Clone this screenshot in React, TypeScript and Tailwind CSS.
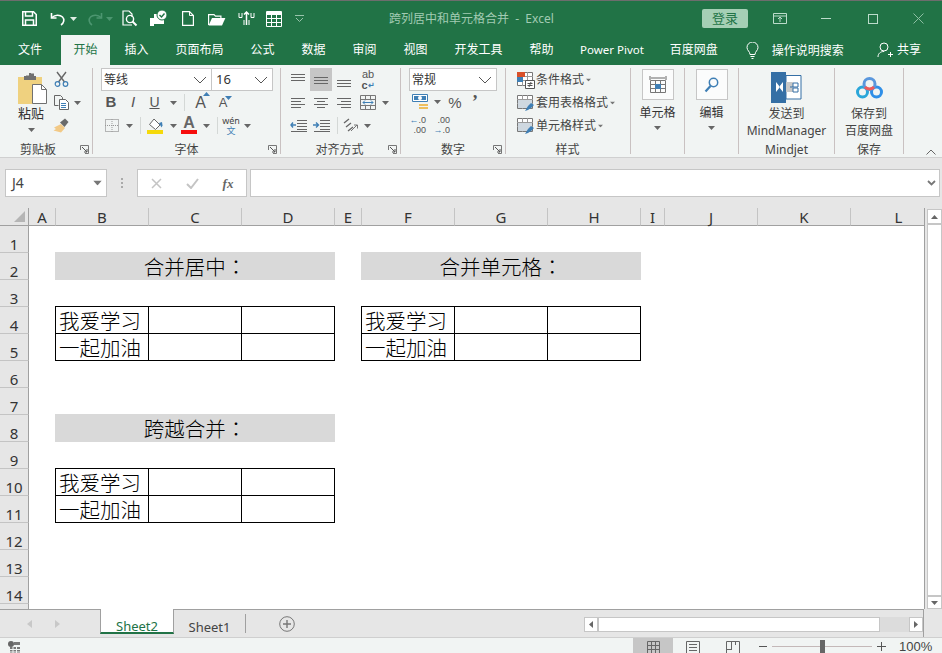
import type { ReactNode } from 'react'
import clsx from 'clsx'

const cjk = "font-['Noto_Sans','Noto_Sans_CJK_SC',sans-serif]"

function Svg({ w, h, children, className }: { w: number; h: number; children: ReactNode; className?: string }) {
  return (
    <svg width={w} height={h} viewBox={`0 0 ${w} ${h}`} fill="none" className={clsx('block shrink-0', className)}>
      {children}
    </svg>
  )
}

function Caret({ color = '#666666', className }: { color?: string; className?: string }) {
  return (
    <Svg w={7} h={4} className={className}>
      <path d="M0 0h7L3.5 4z" fill={color} />
    </Svg>
  )
}

function Chevron({ className }: { className?: string }) {
  return (
    <Svg w={14} h={8} className={className}>
      <path d="M1 1l6 6 6-6" stroke="#555" strokeWidth="1" />
    </Svg>
  )
}

function Slot({ className, children }: { className: string; children?: ReactNode }) {
  return <div className={clsx('flex shrink-0 items-center justify-center', className)}>{children}</div>
}

function VSep({ className }: { className?: string }) {
  return <div className={clsx('h-[17px] w-px shrink-0 bg-[#d4d8d6]', className)} />
}

function Lines({ rows }: { rows: [number, number, number][] }) {
  return (
    <Svg w={16} h={16}>
      {rows.map(([x1, x2, y]) => (
        <path key={y} d={`M${x1} ${y + 0.5}H${x2}`} stroke="#666" />
      ))}
    </Svg>
  )
}

function Group({
  className,
  label,
  launcher,
  children,
}: {
  className: string
  label?: ReactNode
  launcher?: boolean
  children: ReactNode
}) {
  return (
    <div className={clsx('relative flex h-full shrink-0 flex-col border-r border-[#c9c1c1]', className)}>
      <div className="h-[74px] shrink-0">{children}</div>
      <div className="flex h-[15px] shrink-0 items-center justify-center text-xs leading-none text-[#444]">{label}</div>
      {launcher && (
        <Svg w={9} h={9} className="absolute right-[3px] bottom-0">
          <path d="M.5 5V.5H8.5V8.5H5" stroke="#777" />
          <path d="M2 2l5 5M7 4v3H4" stroke="#555" />
        </Svg>
      )}
    </div>
  )
}

function Combo({ className, text, textClass }: { className: string; text: string; textClass?: string }) {
  return (
    <div className={clsx('flex h-[23px] shrink-0 items-center justify-between border border-[#c6c6c6] bg-white pr-[4px] pl-[2px]', className)}>
      <span className={clsx('text-xs leading-none text-[#333]', textClass)}>{text}</span>
      <Chevron />
    </div>
  )
}

function TitleBar() {
  return (
    <div className="flex h-[35px] shrink-0 items-center border-t border-[#6d6d6d] bg-[#217346] pt-[1px]">
      <Slot className="ml-[21px] w-[16px]">
        <Svg w={15} h={15}>
          <path d="M.75.75H11.5l2.75 2.75V14.25H.75z" stroke="#fff" strokeWidth="1.5" />
          <path d="M3.5 1v4h7V1M3.5 14V9h8v5" stroke="#fff" strokeWidth="1.5" />
        </Svg>
      </Slot>
      <Slot className="ml-[13px] w-[16px]">
        <Svg w={16} h={14}>
          <path d="M1.500 1v5h5" stroke="#fff" strokeWidth="1.6" />
          <path d="M2 5.500C5 2.500 10 2.500 12.500 5c2.300 2.300 1.500 6-1.500 8" stroke="#fff" strokeWidth="1.6" />
        </Svg>
      </Slot>
      <Caret color="#dfeee5" className="ml-[4px]" />
      <Slot className="ml-[10px] w-[16px]">
        <Svg w={16} h={14}>
          <path d="M14.500 1v5h-5" stroke="#4c9670" strokeWidth="1.6" />
          <path d="M14 5.500C11 2.500 6 2.500 3.500 5c-2.300 2.300-1.500 6 1.500 8" stroke="#4c9670" strokeWidth="1.6" />
        </Svg>
      </Slot>
      <Caret color="#4c9670" className="ml-[3px]" />
      <Slot className="ml-[9px] w-[16px]">
        <Svg w={16} h={17}>
          <path d="M10 15H1V1h6l3 3v3" stroke="#fff" strokeWidth="1.2" />
          <circle cx="8" cy="9" r="3.6" stroke="#fff" strokeWidth="1.4" />
          <path d="M10.500 11.500l4 4" stroke="#fff" strokeWidth="2" />
        </Svg>
      </Slot>
      <Slot className="ml-[13px] w-[16px]">
        <Svg w={18} h={17}>
          <path d="M0 8h4V4h6v4h4v6H4v2H0z" fill="#fff" />
          <circle cx="12" cy="5" r="5" fill="#fff" stroke="#217346" />
          <path d="M9.500 5l2 2 3-3.500" stroke="#217346" strokeWidth="1.4" />
        </Svg>
      </Slot>
      <Slot className="ml-[13px] w-[16px]">
        <Svg w={12} h={15}>
          <path d="M.6.6H7.500L11.400 4.500V14.400H.6z" stroke="#fff" strokeWidth="1.2" />
          <path d="M7.500.6V4.500H11.400" stroke="#fff" />
        </Svg>
      </Slot>
      <Slot className="ml-[13px] w-[16px]">
        <Svg w={18} h={14}>
          <path d="M.6 13V2.600H6l1.500 1.500h5.400V6" stroke="#fff" strokeWidth="1.2" />
          <path d="M.6 13.400L4 6h13.400l-3.400 7.400z" fill="#fff" />
        </Svg>
      </Slot>
      <Slot className="ml-[13px] w-[16px]">
        <Svg w={17} h={15}>
          <path d="M8.500 1v13M6 3.500L8.500 1 11 3.500" stroke="#fff" strokeWidth="1.5" />
          <path d="M1 2v4.500h3V2M13 2v4.500h3V2M6 9v5M11 9v5" stroke="#fff" />
        </Svg>
      </Slot>
      <Slot className="ml-[12px] w-[16px]">
        <Svg w={16} h={16}>
          <path d="M.5.500h15v15H.5z" stroke="#fff" />
          <path d="M0 1h16v3H0z" fill="#fff" />
          <path d="M0 7.500h16M0 11.500h16M5.500 0v16M10.500 0v16" stroke="#fff" />
        </Svg>
      </Slot>
      <Slot className="ml-[12px] w-[10px]">
        <Svg w={9} h={7}>
          <path d="M0 .5h9" stroke="#98c4ab" />
          <path d="M1 3l3.500 3.500L8 3" stroke="#98c4ab" />
        </Svg>
      </Slot>
      <div className="ml-[85px] w-[160px] text-center text-xs leading-none whitespace-pre text-[#a2cbb3]">跨列居中和单元格合并  -  Excel</div>
      <div className="ml-[153px] flex h-[19px] w-[46px] items-center justify-center rounded-[2px] bg-[#a5cfb5] text-[13px] leading-none text-[#217346]">登录</div>
      <Slot className="ml-[25px] w-[14px]">
        <Svg w={14} h={11}>
          <path d="M.5.5h13v10H.5zM1 3h12" stroke="#bcdccb" />
          <path d="M7 9V4.500M5 6l2-2 2 2" stroke="#bcdccb" />
        </Svg>
      </Slot>
      <Slot className="ml-[33px] w-[11px]">
        <div className="h-px w-[10px] bg-[#bcdccb]" />
      </Slot>
      <Slot className="ml-[36px] w-[11px]">
        <div className="h-[10px] w-[10px] border border-[#bcdccb]" />
      </Slot>
      <Slot className="ml-[35px] w-[11px]">
        <Svg w={11} h={11}>
          <path d="M.5.5l10 10M10.500.5l-10 10" stroke="#8dbfa3" />
        </Svg>
      </Slot>
    </div>
  )
}

const tabNames = ['插入', '页面布局', '公式', '数据', '审阅', '视图', '开发工具', '帮助']

function TabBar() {
  return (
    <div className="flex h-[30px] shrink-0 items-end bg-[#217346] text-xs leading-none text-white">
      <div className="flex h-[30px] items-center pr-[19px] pl-[18px]">文件</div>
      <div className="flex h-[30px] w-[49px] items-center justify-center bg-[#f1f4f3] text-[#217346]">开始</div>
      <div className="ml-[1px] flex">
        {tabNames.map((t) => (
          <div key={t} className="flex h-[30px] w-[51px] items-center justify-center px-0 whitespace-nowrap first:w-[51px] [&:nth-child(2)]:w-[75px] [&:nth-child(7)]:w-[75px]">
            {t}
          </div>
        ))}
        <div className="flex h-[30px] items-center pr-[13px] pl-[13px] text-[11.5px] whitespace-nowrap">Power Pivot</div>
        <div className="flex h-[30px] items-center px-[13px] whitespace-nowrap">百度网盘</div>
      </div>
      <Slot className="ml-[14px] h-[30px] w-[16px]">
        <Svg w={13} h={17}>
          <path d="M4 12.500C4 9.500 1 8.500 1 5.500a5.500 5.500 0 0 1 11 0c0 3-3 4-3 7zM4.500 14.500h4M5.500 16.500h2" stroke="#fff" strokeWidth="1" />
        </Svg>
      </Slot>
      <div className="ml-[11px] flex h-[30px] items-center pt-[1px]">操作说明搜索</div>
      <Slot className="ml-[33px] h-[30px] w-[16px]">
        <Svg w={16} h={16}>
          <circle cx="7" cy="5" r="4" stroke="#fff" />
          <path d="M1 15c0-3.500 2.500-5.500 6-5.500M11 12.500h5M13.500 10v5" stroke="#fff" />
        </Svg>
      </Slot>
      <div className="ml-[4px] flex h-[30px] items-center">共享</div>
    </div>
  )
}

function ClipboardGroup() {
  return (
    <Group className="w-[93px]" label={<span className="pr-[16px]">剪贴板</span>} launcher>
      <div className="flex">
        <div className="flex w-[48px] flex-col items-center pt-[5px] pl-[14px]">
          <Svg w={30} h={31} className="ml-[4px]">
            <path d="M0 4h24v27H0z" fill="#efd17f" />
            <path d="M8 3h8V0.500h-3V0h-2v2.500H8zM6 3h12v4H6z" fill="#707070" />
            <path d="M14.500 11.500h9l5 5v14h-14z" fill="#fff" stroke="#707070" />
            <path d="M23.500 11.500v5h5" stroke="#707070" />
          </Svg>
          <span className="text-[13px] leading-[18px] text-[#333]">粘贴</span>
          <Caret className="mt-[6px]" />
        </div>
        <div className="flex flex-col pt-[2px]">
          <Slot className="ml-[5px] h-[17px] w-[16px]">
            <Svg w={15} h={16}>
              <path d="M3 1l7.500 10M12 1L4.500 11" stroke="#666" strokeWidth="1.400" />
              <circle cx="3.500" cy="13" r="2.300" stroke="#3f7fb5" strokeWidth="1.200" />
              <circle cx="11.500" cy="13" r="2.300" stroke="#3f7fb5" strokeWidth="1.200" />
            </Svg>
          </Slot>
          <div className="mt-[7px] flex h-[17px] items-center">
            <Slot className="ml-[5px] w-[16px]">
              <Svg w={15} h={15}>
                <path d="M.5.500h6l2 2v2M.5.500v10h4" stroke="#666" />
                <path d="M5.500 4.500h6l3 3v7h-9z" fill="#fff" stroke="#666" />
                <path d="M7 8.500h5M7 10.500h5M7 12.500h5" stroke="#3f7fb5" />
              </Svg>
            </Slot>
            <Caret className="ml-[5px]" />
          </div>
          <Slot className="mt-[6px] ml-[5px] h-[17px] w-[16px]">
            <Svg w={16} h={15}>
              <path d="M8 6l4 4-4 4.500L.5 12.500 3 11 1 9.500z" fill="#f2c986" />
              <path d="M7 4.500l4.500 4.500L15.500 4 12 .5z" fill="#6a6a6a" />
            </Svg>
          </Slot>
        </div>
      </div>
    </Group>
  )
}

function FontGroup() {
  return (
    <Group className="w-[188px]" label={<span>字体</span>} launcher>
      <div className="flex flex-col pl-[8px]">
        <div className="flex">
          <Combo className="w-[111px]" text="等线" />
          <Combo className="-ml-px w-[62px]" text="16" textClass="text-[13px] pl-[2px]" />
        </div>
        <div className="mt-[1px] flex h-[21px] items-center font-['Liberation_Sans',sans-serif] text-[#555]">
          <Slot className="-ml-px w-[22px] text-[15px] font-bold">B</Slot>
          <Slot className="w-[22px] text-[15px] italic">I</Slot>
          <Slot className="w-[21px] text-[14px] underline">U</Slot>
          <Caret className="ml-[5px]" />
          <VSep className="ml-[7px]" />
          <Slot className="relative ml-[5px] w-[21px] text-[16px]">
            A
            <Caret color="#3f7fb5" className="absolute top-[1px] right-[1px] rotate-180" />
          </Slot>
          <Slot className="relative ml-[1px] w-[22px] text-[13px]">
            A
            <Caret color="#3f7fb5" className="absolute top-[3px] right-[2px]" />
          </Slot>
        </div>
        <div className="mt-[2px] flex h-[21px] items-center">
          <Slot className="ml-[3px] w-[16px]">
            <Svg w={14} h={13}>
              <path d="M.5.5h13v12H.5z" stroke="#777" strokeDasharray="1 1" />
              <path d="M0 6.500h14M7 0v13" stroke="#999" strokeDasharray="1 1" />
            </Svg>
          </Slot>
          <Caret className="ml-[6px]" />
          <VSep className="ml-[7px]" />
          <Slot className="ml-[5px] w-[18px]">
            <div className="flex flex-col items-center">
              <Svg w={16} h={12}>
                <path d="M7 1l6 6-4.500 4.500-6-5z" fill="#fff" stroke="#666" />
                <path d="M12 5l3-1 .5 3.500-1 2z" fill="#3f7fb5" />
              </Svg>
              <div className="h-[4px] w-[16px] bg-[#f5d90a]" />
            </div>
          </Slot>
          <Caret className="ml-[6px]" />
          <div className="ml-[4px] flex w-[16px] flex-col items-center">
            <span className="font-['Liberation_Sans',sans-serif] text-[16px] leading-[12px] font-bold text-[#666]">A</span>
            <div className="mt-[1px] h-[4px] w-[16px] bg-[#f60d0d]" />
          </div>
          <Caret className="ml-[6px]" />
          <VSep className="ml-[7px]" />
          <div className="ml-[4px] flex w-[18px] flex-col items-center text-[9px] leading-[10px]">
            <span className="text-[#444]">wén</span>
            <span className="text-[#3f7fb5]">文</span>
          </div>
          <Caret className="ml-[4px]" />
        </div>
      </div>
    </Group>
  )
}

function AlignGroup() {
  return (
    <Group className="w-[120px]" label={<span className="pr-[2px]">对齐方式</span>} launcher>
      <div className="flex flex-col pl-[6px]">
        <div className="flex h-[23px] items-center">
          <Slot className="h-[23px] w-[22px]">
            <Lines rows={[[1, 15, 2], [1, 15, 5], [1, 15, 8]]} />
          </Slot>
          <Slot className="ml-[1px] h-[23px] w-[22px] bg-[#c6c6c6]">
            <Lines rows={[[1, 15, 5], [1, 15, 8], [1, 15, 11]]} />
          </Slot>
          <Slot className="ml-[1px] h-[23px] w-[22px]">
            <Lines rows={[[1, 15, 8], [1, 15, 11], [1, 15, 14]]} />
          </Slot>
          <Slot className="ml-[1px] w-[24px] flex-col font-['Liberation_Sans',sans-serif] text-[11px] leading-[11px] text-[#555]">
            <span>ab</span>
            <span className="flex items-center font-bold">
              c<span className="text-[8px] text-[#3f7fb5]">↵</span>
            </span>
          </Slot>
        </div>
        <div className="mt-[1px] flex h-[21px] items-center">
          <Slot className="w-[22px]">
            <Lines rows={[[1, 15, 3], [1, 11, 6], [1, 15, 9], [1, 11, 12]]} />
          </Slot>
          <Slot className="ml-[1px] w-[22px]">
            <Lines rows={[[1, 15, 3], [4, 12, 6], [1, 15, 9], [4, 12, 12]]} />
          </Slot>
          <Slot className="ml-[1px] w-[22px]">
            <Lines rows={[[1, 15, 3], [5, 15, 6], [1, 15, 9], [5, 15, 12]]} />
          </Slot>
          <Slot className="ml-[2px] w-[22px]">
            <Svg w={16} h={15}>
              <path d="M.5.500h15v14H.5zM0 4.500h16M0 10.500h16M5.500 0v4M10.500 0v4M5.500 11v4M10.500 11v4" stroke="#777" />
              <path d="M3 7.500h10M3 7.500l2-2M3 7.500l2 2M13 7.500l-2-2M13 7.500l-2 2" stroke="#3f7fb5" />
            </Svg>
          </Slot>
          <Caret className="ml-[3px]" />
        </div>
        <div className="mt-[2px] flex h-[21px] items-center">
          <Slot className="w-[22px]">
            <Svg w={17} h={14}>
              <path d="M7 1.500h10M7 4.500h10M7 7.500h10M7 10.500h10M1 12.500h16" stroke="#666" />
              <path d="M6 6H1M3 3.500L1 6l2 2.500" stroke="#3f7fb5" strokeWidth="1.400" />
            </Svg>
          </Slot>
          <Slot className="ml-[1px] w-[22px]">
            <Svg w={17} h={14}>
              <path d="M7 1.500h10M7 4.500h10M7 7.500h10M7 10.500h10M1 12.500h16" stroke="#666" />
              <path d="M0 6h5M3 3.500L5.500 6 3 8.500" stroke="#3f7fb5" strokeWidth="1.400" />
            </Svg>
          </Slot>
          <VSep className="ml-[5px]" />
          <Slot className="ml-[4px] w-[18px]">
            <Svg w={16} h={15}>
              <path d="M1 5l5-4M3 9l5-4M5 13l5-4" stroke="#666" strokeWidth="1.300" />
              <path d="M8 13l6-6M11 7h3.500v3.500" stroke="#777" />
            </Svg>
          </Slot>
          <Caret className="ml-[4px]" />
        </div>
      </div>
    </Group>
  )
}

function NumberGroup() {
  return (
    <Group className="w-[105px]" label={<span>数字</span>} launcher>
      <div className="flex flex-col pl-[8px]">
        <Combo className="w-[88px]" text="常规" />
        <div className="flex h-[22px] items-center">
          <Slot className="ml-[2px] w-[18px]">
            <Svg w={17} h={16}>
              <path d="M.5.500h15v7H.5z" fill="#fff" stroke="#3f7fb5" />
              <path d="M2 2h12v4H2z" fill="#3f7fb5" />
              <circle cx="8" cy="4" r="2" fill="#fff" />
              <path d="M7 10h9v2H7zM7 13h9v2H7z" fill="#eebf5e" />
            </Svg>
          </Slot>
          <Caret className="ml-[5px]" />
          <Slot className="ml-[3px] w-[22px] font-['Liberation_Sans',sans-serif] text-[15px] leading-none text-[#555]">%</Slot>
          <Slot className="ml-[3px] w-[12px] font-['Liberation_Serif',serif] text-[18px] leading-none font-bold text-[#555]">’</Slot>
        </div>
        <div className="mt-[1px] flex h-[22px] items-center font-['Liberation_Sans',sans-serif] text-[9px] leading-[10px] text-[#555]">
          <div className="-ml-px w-[18px] text-right">
            <div>
              <span className="text-[#3f7fb5]">←</span>.0
            </div>
            <div>.00</div>
          </div>
          <div className="ml-[6px] w-[18px] text-right">
            <div>.00</div>
            <div>
              <span className="text-[#3f7fb5]">→</span>.0
            </div>
          </div>
        </div>
      </div>
    </Group>
  )
}

function StyleIcon({ accent }: { accent?: boolean }) {
  return (
    <Svg w={18} h={17}>
      <path d="M.5.5h15v13H.5z" fill="#fff" stroke="#777" />
      <path d="M0 4.500h16M0 8.500h16M5.500 0v14M10.500 0v14" stroke="#999" />
      {accent ? (
        <>
          <path d="M0 0h8v5H0z" fill="#d8502a" />
          <path d="M0 5h6v5H0z" fill="#3f7fb5" />
          <path d="M8.500 8.500h9v8h-9z" fill="#fff" stroke="#555" />
          <path d="M10.500 11.500h5M10.500 13.500h5M14 10l-2 5" stroke="#555" />
        </>
      ) : (
        <>
          <path d="M1 5h14v8H1z" fill="#cfd8e0" />
          <path d="M8 16l3-5 3-3 3 2-3 3-3 2z" fill="#3f7fb5" />
        </>
      )}
    </Svg>
  )
}

function StyleRow({ text, accent, className }: { text: string; accent?: boolean; className?: string }) {
  return (
    <div className={clsx('flex h-[22px] items-center pl-[11px]', className)}>
      <StyleIcon accent={accent} />
      <span className="ml-[1px] text-xs leading-none text-[#444]">{text}</span>
      <Caret color="#777" className="ml-[1px] scale-75" />
    </div>
  )
}

function StylesGroup() {
  return (
    <Group className="w-[125px]" label={<span className="pr-[1px]">样式</span>}>
      <div className="flex flex-col pt-[1px]">
        <StyleRow text="条件格式" accent />
        <StyleRow text="套用表格格式" className="mt-[1px]" />
        <StyleRow text="单元格样式" className="mt-[1px]" />
      </div>
    </Group>
  )
}

function BoxGroup({ text, children, className }: { text: string; children: ReactNode; className: string }) {
  return (
    <Group className={className}>
      <div className="flex flex-col items-center pt-[1px]">
        <Slot className="h-[31px] w-[32px] border border-[#c6c6c6] bg-[#fbfcfc]">{children}</Slot>
        <span className="mt-[4px] text-xs leading-[17px] text-[#333]">{text}</span>
        <Caret className="mt-[5px]" />
      </div>
    </Group>
  )
}

function BigGroup({
  icon,
  lines,
  label,
  className,
}: {
  icon: ReactNode
  lines: string[]
  label: string
  className: string
}) {
  return (
    <Group className={className} label={label}>
      <div className="flex flex-col items-center pt-[4px] text-xs leading-[17px] text-[#444]">
        <div className="flex h-[31px] items-center">{icon}</div>
        <div className="mt-[2px] text-center">
          {lines.map((l) => (
            <div key={l}>{l}</div>
          ))}
        </div>
      </div>
    </Group>
  )
}

function Ribbon() {
  return (
    <div className={clsx('flex h-[93px] shrink-0 border-b border-[#d0d0d0] bg-[#f1f4f3] pt-[3px] pb-[3px]', cjk)}>
      <ClipboardGroup />
      <FontGroup />
      <AlignGroup />
      <NumberGroup />
      <StylesGroup />
      <BoxGroup text="单元格" className="w-[54px]">
        <Svg w={18} h={17}>
          <path d="M1 0v4M17 0v4M2 2h14" stroke="#666" />
          <path d="M1.500 4.500h15v12h-15zM1 8.500h16M1 12.500h16M6.500 4v13M11.500 4v13" stroke="#777" />
          <path d="M6 8h6v5H6z" fill="#3f7fb5" />
        </Svg>
      </BoxGroup>
      <BoxGroup text="编辑" className="w-[54px]">
        <Svg w={15} h={16}>
          <circle cx="9.500" cy="5.500" r="4.200" stroke="#3f7fb5" strokeWidth="1.500" />
          <path d="M6.500 9L1.500 14.500" stroke="#3f7fb5" strokeWidth="2.200" />
        </Svg>
      </BoxGroup>
      <BigGroup
        className="w-[96px]"
        label="Mindjet"
        lines={['发送到', 'MindManager']}
        icon={
          <Svg w={31} h={31}>
            <path d="M0 0h15v31H0z" fill="#356fa5" />
            <path d="M15 3.500h15v23.500H15z" fill="#fff" stroke="#356fa5" />
            <path d="M5 10l4 5-4 5zM12 10l-4 5 4 5z" fill="#fff" />
            <path d="M15 10h7v10h-7z" fill="#c8c8c8" />
            <path d="M19 15h3M22 11h5v4h-5zM22 16h5v4h-5z" stroke="#356fa5" />
          </Svg>
        }
      />
      <BigGroup
        className="w-[69px]"
        label="保存"
        lines={['保存到', '百度网盘']}
        icon={
          <Svg w={27} h={24}>
            <circle cx="6.500" cy="16" r="5" stroke="#2aa6d9" strokeWidth="3" />
            <circle cx="20.500" cy="16" r="5" stroke="#2f8fe8" strokeWidth="3" />
            <circle cx="13.500" cy="8" r="5.500" stroke="#5a97dd" strokeWidth="3" />
            <path d="M9 11c2 2.500 7 2.500 9 0" stroke="#ef5a5a" strokeWidth="3" />
          </Svg>
        }
      />
      <div className="flex flex-1 items-end justify-end pr-[6px]">
        <Svg w={10} h={6} className="-mb-px">
          <path d="M.5 5.500L5 1l4.500 4.500" stroke="#666" />
        </Svg>
      </div>
    </div>
  )
}

function FormulaBar() {
  return (
    <div className="flex h-[50px] shrink-0 bg-[#e6e6e6] pt-[11px] pl-[5px]">
      <div className="flex h-[28px] w-[102px] items-center justify-between border border-[#c6c6c6] bg-white pr-[5px] pl-[6px]">
        <span className="font-['Noto_Sans',sans-serif] text-[14px] leading-none text-[#444]">J4</span>
        <Caret color="#777" className="scale-125" />
      </div>
      <div className="ml-[14px] flex h-[28px] w-[3px] flex-col justify-center gap-[2px]">
        <div className="h-[2px] w-[2px] bg-[#aaa]" />
        <div className="h-[2px] w-[2px] bg-[#aaa]" />
        <div className="h-[2px] w-[2px] bg-[#aaa]" />
      </div>
      <div className="ml-[13px] flex h-[28px] w-[110px] items-center border border-[#c6c6c6] bg-white">
        <Slot className="ml-[8px] w-[20px]">
          <Svg w={11} h={11}>
            <path d="M1 1l9 9M10 1l-9 9" stroke="#c4c4c4" strokeWidth="1.500" />
          </Svg>
        </Slot>
        <Slot className="ml-[16px] w-[20px]">
          <Svg w={13} h={11}>
            <path d="M1 6l4 4 7-9" stroke="#c4c4c4" strokeWidth="2" />
          </Svg>
        </Slot>
        <Slot className="ml-[16px] w-[20px] font-['Liberation_Serif',serif] text-[13px] leading-none font-bold text-[#666] italic">fx</Slot>
      </div>
      <div className="ml-[3px] flex h-[28px] w-[690px] items-center justify-end border border-[#c6c6c6] bg-white pr-[3px]">
        <Svg w={9} h={6}>
          <path d="M1 1l3.500 3.500L8 1" stroke="#777" strokeWidth="1.800" />
        </Svg>
      </div>
    </div>
  )
}

const cols: [string, string][] = [
  ['A', 'col-start-2'],
  ['B', 'col-start-3'],
  ['C', 'col-start-4'],
  ['D', 'col-start-5'],
  ['E', 'col-start-6'],
  ['F', 'col-start-7'],
  ['G', 'col-start-8'],
  ['H', 'col-start-9'],
  ['I', 'col-start-10'],
  ['J', 'col-start-11'],
  ['K', 'col-start-12'],
  ['L', 'col-start-13 pl-[22px] border-r-0'],
]

const rows: [number, string][] = [
  [1, 'row-start-2'],
  [2, 'row-start-3'],
  [3, 'row-start-4'],
  [4, 'row-start-5'],
  [5, 'row-start-6'],
  [6, 'row-start-7'],
  [7, 'row-start-8'],
  [8, 'row-start-9'],
  [9, 'row-start-10'],
  [10, 'row-start-11'],
  [11, 'row-start-12'],
  [12, 'row-start-13'],
  [13, 'row-start-14'],
  [14, 'row-start-15'],
]

const sheetFont = "font-['Noto_Sans_CJK_SC',sans-serif] text-[20.5px] font-light text-black"

function Heading({ text, className }: { text: string; className: string }) {
  return (
    <div className={clsx('col-span-3 -mt-px -ml-px flex h-[28px] w-[280px] items-center justify-center bg-[#d9d9d9] pt-[1px] leading-none', sheetFont, className)}>
      {text}
      <span className="font-['Noto_Sans_CJK_TC',sans-serif]">：</span>
    </div>
  )
}

function DataTable({ className }: { className: string }) {
  const cell = 'border-r border-b border-black'
  return (
    <div className={clsx('col-span-3 row-span-2 -mt-px -ml-px grid h-[55px] w-[280px] grid-cols-[93px_93px_93px] grid-rows-[27px_27px] border-t border-l border-black leading-none', sheetFont, className)}>
      <div className={clsx(cell, 'flex items-end pb-[3px] pl-[3px]')}>我爱学习</div>
      <div className={cell} />
      <div className={cell} />
      <div className={clsx(cell, 'flex items-end pb-[3px] pl-[3px]')}>一起加油</div>
      <div className={cell} />
      <div className={cell} />
    </div>
  )
}

function Sheet() {
  return (
    <div className="grid h-[401px] w-[925px] shrink-0 grid-cols-[29px_27px_93px_93px_93px_27px_93px_93px_93px_24px_93px_93px_73px_1px] grid-rows-[18px_repeat(14,27px)_5px] overflow-hidden bg-white">
      <div className="col-start-1 row-start-1 flex items-end justify-end border-r border-b border-[#a0a0a0] bg-[#e6e6e6] pr-[2px] pb-[2px]">
        <Svg w={12} h={12}>
          <path d="M11 0v11H0z" fill="#b5b5b5" />
        </Svg>
      </div>
      {cols.map(([name, col]) => (
        <div
          key={name}
          className={clsx(col, "row-start-1 flex items-end justify-center border-r border-b border-r-[#c4c4c4] border-b-[#a0a0a0] bg-[#e6e6e6] font-['Noto_Sans',sans-serif] text-[15px] leading-[15px] text-[#333]")}
        >
          {name}
        </div>
      ))}
      <div className="col-start-14 row-span-16 row-start-1 bg-[#a0a0a0]" />
      {rows.map(([n, row]) => (
        <div
          key={n}
          className={clsx(row, "col-start-1 flex items-end justify-center border-r border-b border-r-[#a0a0a0] border-b-[#c4c4c4] bg-[#e6e6e6] font-['Noto_Sans',sans-serif] text-[15px] leading-[15px] text-[#333]")}
        >
          {n}
        </div>
      ))}
      <div className="col-start-1 row-start-16 border-r border-[#a0a0a0] bg-[#e6e6e6]" />

      <Heading text="合并居中" className="col-start-3 row-start-3" />
      <Heading text="合并单元格" className="col-start-7 row-start-3" />
      <Heading text="跨越合并" className="col-start-3 row-start-9" />
      <DataTable className="col-start-3 row-start-5" />
      <DataTable className="col-start-7 row-start-5" />
      <DataTable className="col-start-3 row-start-11" />
    </div>
  )
}

function VScroll() {
  return (
    <div className="flex flex-1 flex-col items-end bg-[#e6e6e6] pt-[1px]">
      <Slot className="h-[15px] w-[15px] border border-[#c6c6c6] bg-white">
        <Caret color="#666" className="rotate-180" />
      </Slot>
      <div className="h-[372px] w-[15px] border border-[#c6c6c6] bg-white" />
      <Slot className="h-[13px] w-[15px] border border-[#c6c6c6] bg-white">
        <Caret color="#666" />
      </Slot>
    </div>
  )
}

function SheetTabs() {
  return (
    <div className={clsx('flex h-[28px] shrink-0 bg-[#e6e6e6] text-[13px] leading-none', cjk)}>
      <div className="flex h-full w-[100px] items-start border-t border-[#a0a0a0] pt-[10px]">
        <Svg w={5} h={8} className="ml-[27px]">
          <path d="M5 0v8L0 4z" fill="#c8c8c8" />
        </Svg>
        <Svg w={5} h={8} className="ml-[23px]">
          <path d="M0 0v8l5-4z" fill="#c8c8c8" />
        </Svg>
      </div>
      <div className="flex h-[25px] w-[74px] items-end justify-center border-x border-b-2 border-x-[#a0a0a0] border-b-[#217346] bg-white text-[#217346]">
        <span className="relative top-[1px]">Sheet2</span>
      </div>
      <div className="flex h-full w-[71px] items-start justify-center border-t border-[#a0a0a0] pt-[11px] text-[#444]">Sheet1</div>
      <div className="flex h-full flex-1 items-start border-t border-[#a0a0a0] pt-[4px]">
        <div className="h-[19px] w-px bg-[#a0a0a0]" />
        <Svg w={16} h={16} className="mt-[2px] ml-[33px]">
          <circle cx="8" cy="8" r="7.300" stroke="#777" />
          <path d="M4 8h8M8 4v8" stroke="#777" strokeWidth="1.400" />
        </Svg>
      </div>
      <div className="flex h-full w-[340px] items-start border-t border-r border-[#a0a0a0] pt-[7px]">
        <Slot className="h-[15px] w-[14px] border border-[#c6c6c6] bg-white">
          <Svg w={4} h={7}>
            <path d="M4 0v7L0 3.500z" fill="#666" />
          </Svg>
        </Slot>
        <div className="h-[15px] w-[282px] border border-[#c6c6c6] bg-white" />
        <div className="h-[15px] w-[29px] bg-[#dcdcdc]" />
        <Slot className="h-[15px] w-[14px] border border-[#c6c6c6] bg-white">
          <Svg w={4} h={7}>
            <path d="M0 0v7l4-3.500z" fill="#666" />
          </Svg>
        </Slot>
      </div>
      <div className="w-[18px]" />
    </div>
  )
}

function StatusBar() {
  return (
    <div className={clsx('flex h-[16px] shrink-0 items-start overflow-hidden border-t border-[#cfcfcf] bg-[#f1f4f3] text-[#444]', cjk)}>
      <Svg w={14} h={14} className="mt-[3px] ml-[8px]">
        <circle cx="3" cy="3" r="3" fill="#666" />
        <path d="M6 1h6v3H6zM2 6h10v8H2z" fill="#777" />
        <path d="M2 8.500h10M2 11h10M5 6v8M8.500 6v8" stroke="#f1f4f3" />
      </Svg>
      <div className="ml-[611px] flex h-[16px] w-[40px] justify-center bg-[#c6c6c6] pt-[3px]">
        <Svg w={13} h={13}>
          <path d="M.5.500h12v12H.5zM.5 4.500h12M.5 8.500h12M4.500 0v13M8.500 0v13" stroke="#666" />
        </Svg>
      </div>
      <Svg w={14} h={14} className="mt-[3px] ml-[13px]">
        <path d="M.5.500h13v13H.5z" stroke="#666" />
        <path d="M3 3.500h8M3 6.500h8M3 9.500h8" stroke="#666" />
      </Svg>
      <Svg w={14} h={14} className="mt-[3px] ml-[26px]">
        <path d="M.5.500h13v13H.5zM5.500 0v8M9.500 0v4M0 8.500h6" stroke="#666" />
      </Svg>
      <div className="mt-[8px] ml-[19px] h-px w-[8px] bg-[#555]" />
      <div className="relative mt-[8px] ml-[5px] h-px w-[100px] bg-[#c4b8b8]">
        <div className="absolute -top-[6px] left-[48px] h-[13px] w-[5px] bg-[#666]" />
      </div>
      <Svg w={9} h={9} className="mt-[4px] ml-[5px]">
        <path d="M0 4.500h9M4.500 0v9" stroke="#555" />
      </Svg>
      <div className="mt-[2px] ml-[13px] font-['Liberation_Sans',sans-serif] text-[13px] leading-none">100%</div>
    </div>
  )
}

export default function App() {
  return (
    <div className={clsx('flex h-[653px] w-[942px] flex-col overflow-hidden bg-[#e6e6e6]', cjk)}>
      <TitleBar />
      <TabBar />
      <Ribbon />
      <FormulaBar />
      <div className="flex h-[401px] shrink-0">
        <Sheet />
        <VScroll />
      </div>
      <SheetTabs />
      <StatusBar />
    </div>
  )
}
